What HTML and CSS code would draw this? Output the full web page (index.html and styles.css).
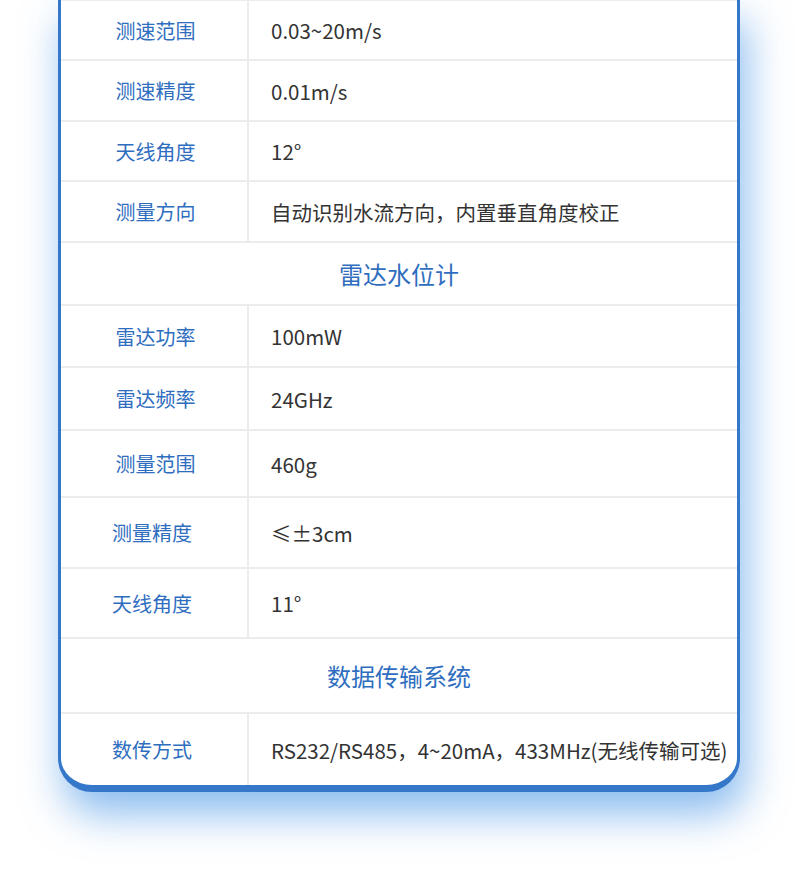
FILE: index.html
```html
<!DOCTYPE html>
<html lang="zh-CN">
<head>
<meta charset="utf-8">
<title>参数表</title>
<link rel="stylesheet" href="styles.css">
</head>
<body>
<div class="page">
  <div class="card">
    <div class="row first h58"><div class="label">测速范围</div><div class="value">0.03~20m/s</div></div>
    <div class="row h59"><div class="label">测速精度</div><div class="value">0.01m/s</div></div>
    <div class="row h58"><div class="label">天线角度</div><div class="value">12°</div></div>
    <div class="row h59"><div class="label">测量方向</div><div class="value">自动识别水流方向，内置垂直角度校正</div></div>
    <div class="section h61">雷达水位计</div>
    <div class="row h60"><div class="label">雷达功率</div><div class="value">100mW</div></div>
    <div class="row h61"><div class="label">雷达频率</div><div class="value">24GHz</div></div>
    <div class="row h65"><div class="label">测量范围</div><div class="value">460g</div></div>
    <div class="row h69"><div class="label shift">测量精度</div><div class="value">≤±3cm</div></div>
    <div class="row h68"><div class="label shift">天线角度</div><div class="value">11°</div></div>
    <div class="section h73">数据传输系统</div>
    <div class="row last h71"><div class="label shift">数传方式</div><div class="value">RS232/RS485，4~20mA，433MHz(无线传输可选)</div></div>
  </div>
</div>
</body>
</html>
```

FILE: styles.css
```css
html, body {
  margin: 0;
  padding: 0;
  background: #ffffff;
}

body {
  font-family: "Noto Sans CJK SC", "Noto Sans", sans-serif;
  height: 871px;
  overflow: hidden;
}

.page {
  padding-left: 58px;
  margin-top: -1px;
}

.card {
  width: 682px;
  box-sizing: border-box;
  background: #ffffff;
  border: 3px solid #3577c9;
  border-top: none;
  border-bottom-width: 7px;
  border-radius: 0 0 34px 34px;
  overflow: hidden;
  box-shadow: 6px 22px 42px rgba(55, 140, 228, 0.58);
}

.row {
  display: grid;
  grid-template-columns: 188px 1fr;
  border-bottom: 2px solid #ececec;
}

.row.first {
  border-top: 2px solid #ececec;
}

.row.last {
  border-bottom: none;
}

.label {
  display: flex;
  align-items: center;
  justify-content: center;
  padding-left: 3px;
  border-right: 2px solid #ececec;
  color: #2f6ebf;
  font-size: 20px;
}

.label.shift {
  padding-left: 0;
  padding-right: 4px;
}

.value {
  display: flex;
  align-items: center;
  padding-left: 22px;
  color: #333333;
  font-size: 20.5px;
  white-space: nowrap;
}

.section {
  display: flex;
  align-items: center;
  justify-content: center;
  border-bottom: 2px solid #ececec;
  color: #2f6ebf;
  font-size: 24px;
}

.h58 { height: 58px; }
.h59 { height: 59px; }
.h60 { height: 60px; }
.h61 { height: 61px; }
.h65 { height: 65px; }
.h68 { height: 68px; }
.h69 { height: 69px; }
.h71 { height: 71px; }
.h73 { height: 73px; }
```
